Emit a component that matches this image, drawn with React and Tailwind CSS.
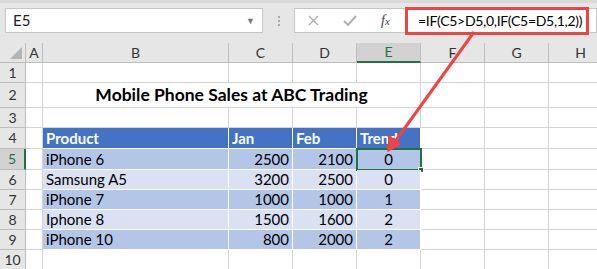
import React from 'react';

const cols = ['A', 'B', 'C', 'D', 'E', 'F', 'G', 'H'];

const data = [
  { product: 'iPhone 6', jan: 2500, feb: 2100, trend: 0 },
  { product: 'Samsung A5', jan: 3200, feb: 2500, trend: 0 },
  { product: 'iPhone 7', jan: 1000, feb: 1000, trend: 1 },
  { product: 'Iphone 8', jan: 1500, feb: 1600, trend: 2 },
  { product: 'iPhone 10', jan: 800, feb: 2000, trend: 2 },
];

const font = { fontFamily: 'Lato, "Liberation Sans", sans-serif' };

function Cell({ className = '', children }) {
  return <div className={`border-r border-b border-[#d4d4d4] overflow-visible whitespace-nowrap ${className}`}>{children}</div>;
}

function TCell({ band, className = '', children }) {
  const bg = band === 'head' ? 'bg-[#4472c4] text-white font-bold' : band === 'dark' ? 'bg-[#b4c6e7]' : 'bg-[#d9e1f2]';
  return <div className={`border-r border-b border-white flex items-center text-[15px] leading-none text-black ${bg} ${className}`}>{children}</div>;
}

function RowHead({ n, active }) {
  return (
    <div
      className={`border-r border-b border-[#bdbdbd] flex items-center justify-center text-[14px] leading-none ${
        active ? 'bg-[#d2d2d2] text-[#217346] border-r-2 border-r-[#217346]' : 'bg-[#e6e6e6] text-[#333]'
      }`}
    >
      {n}
    </div>
  );
}

export default function App() {
  return (
    <div className="w-[597px] h-[269px] overflow-hidden bg-white relative" style={font}>
      {/* barra de fórmulas */}
      <div className="h-[43px] bg-[#e6e6e6] border-t-[3px] border-[#d9d9d9] flex items-start pt-[5px]">
        <div className="ml-[5px] w-[258px] h-[25px] bg-white border border-[#c6c6c6] flex items-center justify-between px-[7px] text-[15px] text-[#222]">
          <span>E5</span>
          <span className="text-[9px] text-[#777]">▼</span>
        </div>
        <div className="w-[31px] h-[25px] flex flex-col items-center justify-center gap-[2px]">
          <span className="w-[2px] h-[2px] bg-[#aaa]" />
          <span className="w-[2px] h-[2px] bg-[#aaa]" />
          <span className="w-[2px] h-[2px] bg-[#aaa]" />
        </div>
        <div className="flex-1 h-[25px] bg-white border border-[#c6c6c6] flex items-center">
          <div className="w-[110px] flex items-center">
            <svg className="ml-[13px]" width="11" height="11" viewBox="0 0 11 11">
              <path d="M1 1L10 10M10 1L1 10" stroke="#b0b0b0" strokeWidth="1.4" />
            </svg>
            <svg className="ml-[24px]" width="14" height="11" viewBox="0 0 14 11">
              <path d="M1 6L5 10L13 1" stroke="#b0b0b0" strokeWidth="2" fill="none" />
            </svg>
            <span className="ml-[24px] text-[14px] italic text-[#444]" style={{ fontFamily: '"Liberation Serif", serif' }}>
              f<span className="text-[11px]">x</span>
            </span>
          </div>
          <div className="h-[28px] w-[184px] border-[3px] border-[#ee4444] flex items-center pl-[10px] text-[14px] tracking-[-0.3px] text-black whitespace-nowrap">
            =IF(C5&gt;D5,0,IF(C5=D5,1,2))
          </div>
        </div>
      </div>

      {/* hoja */}
      <div className="grid grid-cols-[26px_17px_186px_64px_64px_64px_64px_64px_64px] grid-rows-[20px_20px_25px_20px_21px_21px_20px_20px_20px_20px_20px] text-black">
        <div className="bg-[#e6e6e6] border-r border-b border-[#bdbdbd] relative">
          <svg className="absolute right-[3px] bottom-[3px]" width="12" height="12" viewBox="0 0 12 12">
            <path d="M12 0L12 12L0 12Z" fill="#b4b4b4" />
          </svg>
        </div>
        {cols.map((c) => (
          <div
            key={c}
            className={`border-r border-b flex items-center justify-center text-[14px] leading-none ${
              c === 'E' ? 'bg-[#d2d2d2] text-[#217346] border-b-2 border-b-[#217346] border-r-[#bdbdbd]' : 'bg-[#e6e6e6] text-[#333] border-[#bdbdbd]'
            }`}
          >
            {c}
          </div>
        ))}

        {/* fila 1 */}
        <RowHead n={1} />
        {cols.map((c) => <Cell key={c} />)}

        {/* fila 2 */}
        <RowHead n={2} />
        <Cell />
        <Cell className="col-span-4 flex items-center justify-center text-[17.5px] leading-none font-bold">Mobile Phone Sales at ABC Trading</Cell>
        <Cell />
        <Cell />
        <Cell />

        {/* fila 3 */}
        <RowHead n={3} />
        {cols.map((c) => <Cell key={c} />)}

        {/* fila 4 */}
        <RowHead n={4} />
        <Cell />
        <TCell band="head" className="pl-[3px]">Product</TCell>
        <TCell band="head" className="pl-[3px]">Jan</TCell>
        <TCell band="head" className="pl-[3px]">Feb</TCell>
        <TCell band="head" className="pl-[3px]">Trend</TCell>
        <Cell />
        <Cell />
        <Cell />

        {data.map((r, i) => {
          const n = i + 5;
          const band = i % 2 === 0 ? 'dark' : 'light';
          return (
            <React.Fragment key={n}>
              <RowHead n={n} active={n === 5} />
              <Cell />
              <TCell band={band} className="pl-[3px]">{r.product}</TCell>
              <TCell band={band} className="justify-end pr-[3px]">{r.jan}</TCell>
              <TCell band={band} className="justify-end pr-[3px]">{r.feb}</TCell>
              <TCell band={band} className="justify-center relative">
                {r.trend}
                {n === 5 && (
                  <>
                    <div className="absolute -left-px -top-px w-[66px] h-[23px] border-2 border-[#217346]" />
                    <div className="absolute -right-[4px] -bottom-[4px] w-[6px] h-[6px] bg-[#217346] border border-white" />
                  </>
                )}
              </TCell>
              <Cell />
              <Cell />
              <Cell />
            </React.Fragment>
          );
        })}

        <RowHead n={10} />
        {cols.map((c) => <Cell key={c} />)}
      </div>

      {/* flecha */}
      <svg className="absolute left-0 top-0 pointer-events-none" width="597" height="269">
        <line x1="474" y1="32" x2="394" y2="143" stroke="#ee4444" strokeWidth="3" />
        <path d="M388 151L389 136L400 144Z" fill="#ee4444" stroke="#ee4444" strokeWidth="1.5" strokeLinejoin="round" />
      </svg>
    </div>
  );
}
